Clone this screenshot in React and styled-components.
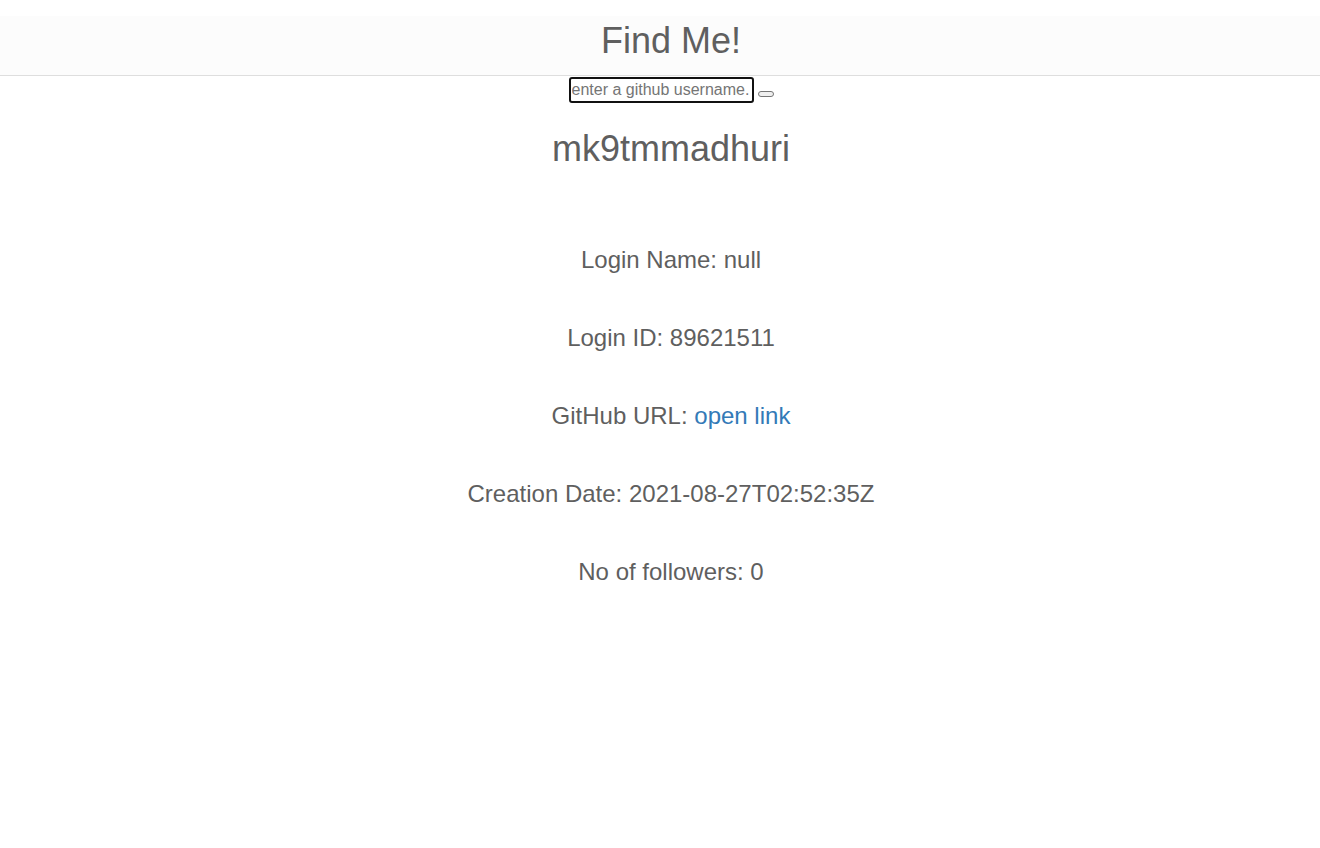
import { useState } from "react";
import styled, { createGlobalStyle } from "styled-components";

const GlobalStyle = createGlobalStyle`
    body {
        margin: 0;
        background: #fff;
        font-family: "Liberation Sans", Arial, sans-serif;
        color: #5f5f5f;
    }
`;

const user = {
    login: "mk9tmmadhuri",
    name: null,
    id: 89621511,
    html_url: "https://github.com/mk9tmmadhuri",
    created_at: "2021-08-27T02:52:35Z",
    followers: 0,
};

export default function App() {
    const [query, setQuery] = useState("");

    const search = (e) => {
        e.preventDefault();
    };

    return (
        <CsPage>
            <GlobalStyle />
            <Header>
                <Title>Find Me!</Title>
            </Header>
            <SearchForm onSubmit={search}>
                <SearchInput
                    type="text"
                    value={query}
                    onChange={(e) => setQuery(e.target.value)}
                    placeholder="enter a github username."
                />
                <SearchButton type="submit" />
            </SearchForm>
            <Profile>
                <UserName>{user.login}</UserName>
                <Details>
                    <Detail>Login Name: {String(user.name)}</Detail>
                    <Detail>Login ID: {user.id}</Detail>
                    <Detail>
                        GitHub URL: <Link href={user.html_url}>open link</Link>
                    </Detail>
                    <Detail>Creation Date: {user.created_at}</Detail>
                    <Detail>No of followers: {user.followers}</Detail>
                </Details>
            </Profile>
        </CsPage>
    );
}

const CsPage = styled.div`
    padding-top: 16px;
    min-height: 832px;
`;

const Header = styled.header`
    height: 59px;
    background-color: #fcfcfc;
    border-bottom: 1px solid #dedede;
    padding-left: 22px;
    box-sizing: content-box;
    text-align: center;
`;

const Title = styled.h1`
    margin: 0;
    padding-top: 5px;
    font-size: 36px;
    font-weight: 400;
    line-height: 40px;
    color: #5f5f5f;
`;

const SearchForm = styled.form`
    display: flex;
    justify-content: center;
    align-items: flex-end;
    gap: 4px;
    margin-top: 1px;
    padding-left: 22px;
`;

const SearchInput = styled.input`
    box-sizing: border-box;
    width: 185px;
    height: 26px;
    padding: 1px 1px;
    border: 2px solid #111;
    border-radius: 3px;
    font-family: "Liberation Sans", Arial, sans-serif;
    font-size: 16px;
    color: #333;
    outline: none;

    &::placeholder {
        color: #757575;
    }
`;

const SearchButton = styled.button`
    box-sizing: border-box;
    width: 16px;
    height: 6px;
    margin-bottom: 6px;
    padding: 0;
    background: #efefef;
    border: 1px solid #767676;
    border-radius: 3px;
`;

const Profile = styled.main`
    padding-left: 22px;
    text-align: center;
`;

const UserName = styled.h2`
    margin: 26px 0 0;
    font-size: 36px;
    font-weight: 400;
    line-height: 40px;
    color: #5f5f5f;
`;

const Details = styled.div`
    display: flex;
    flex-direction: column;
    gap: 50px;
    margin-top: 77px;
`;

const Detail = styled.p`
    margin: 0;
    font-size: 24px;
    line-height: 28px;
    color: #5f5f5f;
`;

const Link = styled.a`
    color: #337ab7;
    text-decoration: none;
`;
